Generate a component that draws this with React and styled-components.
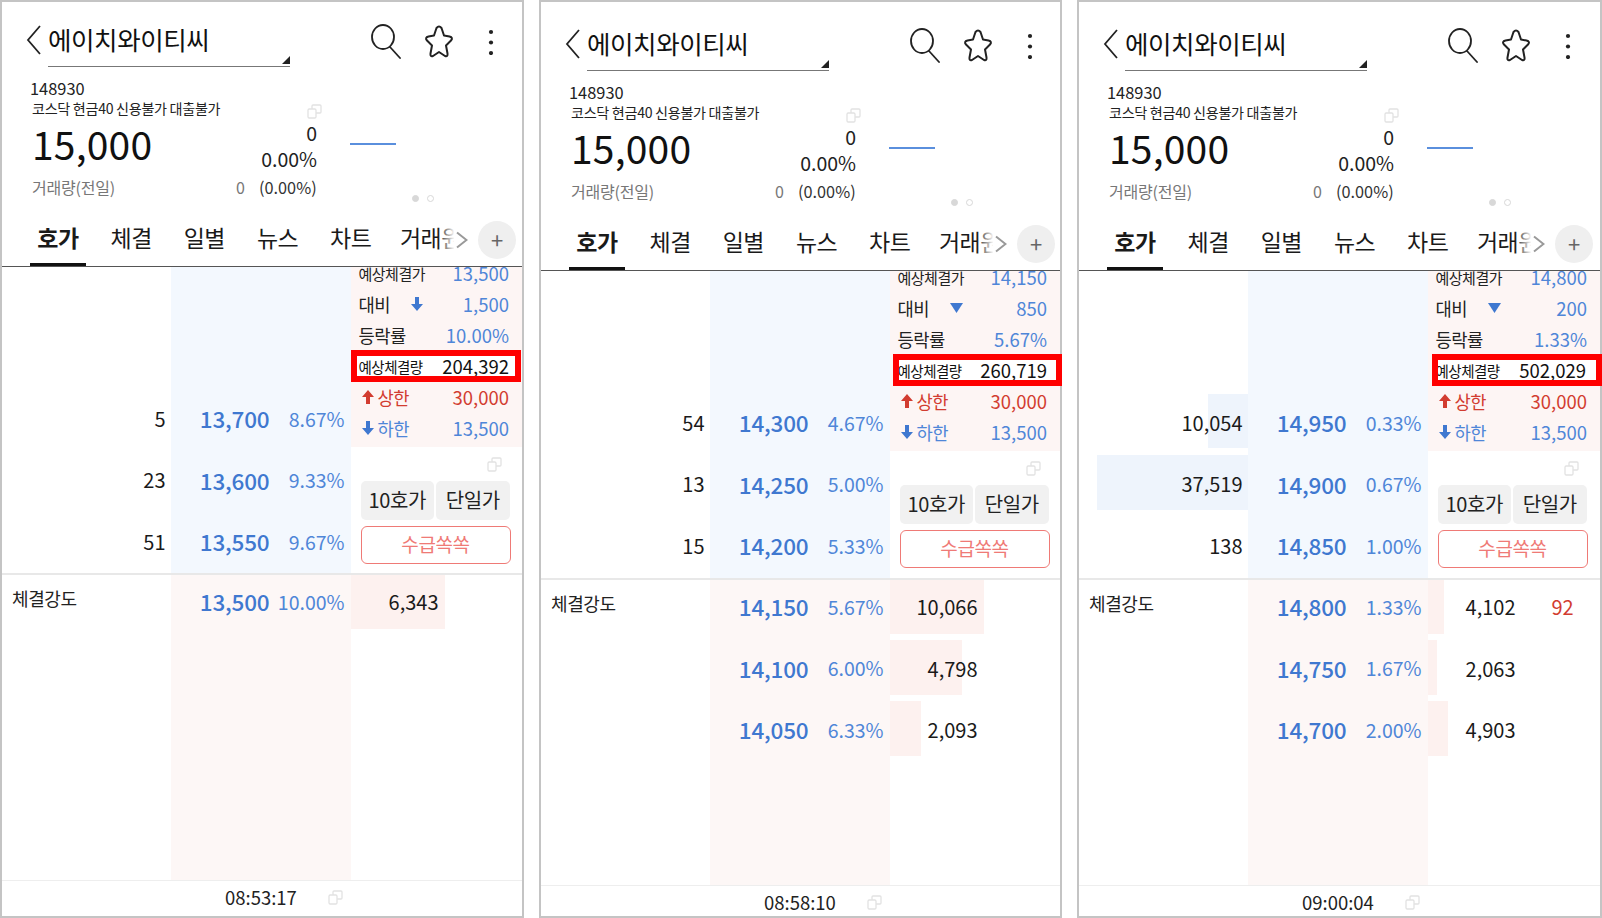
import React from "react";
import styled, { createGlobalStyle } from "styled-components";

const FONT = `"Noto Sans CJK KR", "Noto Sans", sans-serif`;
const BLUE = "#3f78d0";
const LIGHT_BLUE = "#4f86d8";
const RED = "#d23c30";

const GlobalStyle = createGlobalStyle`
  html, body { margin: 0; padding: 0; background: #fff; }
  body { width: 1602px; height: 918px; overflow: hidden; font-family: ${FONT}; }
`;

const Page = styled.div`
  display: flex;
  gap: 15px;
  width: 1602px;
  height: 918px;
`;

const Panel = styled.div`
  width: ${(p) => p.$width}px;
  height: 918px;
  flex: none;
  box-sizing: border-box;
  border: 2px solid #c4c4c4;
  display: flex;
  flex-direction: column;
  padding-top: ${(p) => p.$top}px;
  background: #fff;
  position: relative;
`;

const Head = styled.div`
  height: 65px;
  flex: none;
  display: flex;
  align-items: flex-start;
  padding: 22px 0 0 24px;
  box-sizing: border-box;
`;

const NameBox = styled.div`
  width: 242px;
  height: 42px;
  margin-left: 6px;
  border-bottom: 1px solid #777;
  font-size: 25.500px;
  line-height: 30px;
  letter-spacing: -0.4px;
  color: #111;
  position: relative;
  &::after {
    content: "";
    position: absolute;
    right: 0;
    bottom: 2px;
    border-style: solid;
    border-width: 0 0 8px 8px;
    border-color: transparent transparent #222 transparent;
  }
`;

const HeadIcons = styled.div`
  display: flex;
  align-items: center;
  margin-left: 81px;
`;

const StarSlot = styled.div`
  margin: 0 34px 0 23px;
  line-height: 0;
`;

const Info = styled.div`
  height: 144px;
  flex: none;
  position: relative;
`;

const Code = styled.div`
  padding: 12px 0 0 28px;
  font-size: 16.400px;
  line-height: 19px;
  color: #222;
`;

const Tags = styled.div`
  padding-left: 30px;
  font-size: 14.100px;
  line-height: 20px;
  letter-spacing: -0.3px;
  color: #222;
`;

const PriceRow = styled.div`
  display: flex;
  align-items: flex-start;
  height: 50px;
`;

const Price = styled.div`
  width: 285px;
  padding-left: 30px;
  box-sizing: border-box;
  font-size: 39px;
  line-height: 50px;
  letter-spacing: 0.2px;
  color: #111;
`;

const Change = styled.div`
  flex: none;
  width: 30px;
  margin-top: 2px;
  font-size: 19.500px;
  line-height: 25.500px;
  color: #222;
  display: flex;
  flex-direction: column;
  align-items: flex-end;
  white-space: nowrap;
`;

const FlatLine = styled.div`
  width: 46px;
  height: 1.500px;
  background: #5a8fdd;
  margin: 25px 0 0 33px;
`;

const VolRow = styled.div`
  display: flex;
  align-items: center;
  padding-left: 30px;
  margin-top: 7px;
  height: 24px;
  color: #777;
  font-size: 16px;
`;

const VolLabel = styled.span`
  width: 202px;
  letter-spacing: -0.2px;
`;

const VolValue = styled.span`
  width: 11px;
  text-align: right;
  color: #777;
`;

const VolPct = styled.span`
  margin-left: 14px;
  color: #333;
  font-size: 16.300px;
`;

const Dots = styled.div`
  position: absolute;
  left: 410px;
  bottom: 9px;
  display: flex;
  gap: 8px;
`;

const Dot = styled.span`
  width: 7px;
  height: 7px;
  box-sizing: border-box;
  border-radius: 50%;
  background: ${(p) => (p.$on ? "#d8d8d8" : "#fff")};
  border: 1px solid #d8d8d8;
`;

const FloatCopy = styled.div`
  position: absolute;
  left: ${(p) => p.$left}px;
  top: ${(p) => p.$top}px;
  line-height: 0;
`;

const Tabs = styled.div`
  height: 56px;
  flex: none;
  box-sizing: border-box;
  border-bottom: 1px solid #555;
  display: flex;
  position: relative;
  padding-left: 28px;
`;

const Tab = styled.div`
  width: 56px;
  margin-right: 17.200px;
  margin-left: ${(p) => (p.$last ? 4 : 0)}px;
  height: 55px;
  flex: none;
  box-sizing: border-box;
  text-align: center;
  font-size: 23px;
  line-height: 52px;
  letter-spacing: -0.5px;
  font-weight: ${(p) => (p.$active ? 700 : 400)};
  color: #1a1a1a;
  white-space: nowrap;
  border-bottom: ${(p) => (p.$active ? "3px solid #111" : "0")};
`;

const TabFade = styled.div`
  position: absolute;
  left: 436px;
  top: 10px;
  width: 30px;
  height: 36px;
  background: linear-gradient(to right, rgba(255, 255, 255, 0), #fff 55%);
  line-height: 0;
  padding: 10px 0 0 0;
  box-sizing: border-box;
  display: flex;
  justify-content: flex-end;
`;

const PlusButton = styled.div`
  position: absolute;
  left: 476px;
  top: 10px;
  width: 38px;
  height: 38px;
  border-radius: 50%;
  background: #efefef;
  color: #666;
  font-size: 22px;
  line-height: 36px;
  text-align: center;
`;

const Body = styled.div`
  flex: 1;
  display: flex;
  flex-direction: column;
  min-height: 0;
`;

const Upper = styled.div`
  display: grid;
  grid-template-columns: 168.500px 180px 1fr;
  height: ${(p) => (p.$late ? 309 : 308)}px;
  flex: none;
  box-sizing: border-box;
  border-bottom: 2px solid #e8e8e8;
`;

const AskCol = styled.div`
  display: flex;
  flex-direction: column;
  justify-content: flex-end;
  padding-bottom: ${(p) => (p.$late ? 1 : 0)}px;
`;

const MidCol = styled.div`
  display: flex;
  flex-direction: column;
  justify-content: ${(p) => (p.$lower ? "flex-start" : "flex-end")};
  padding-bottom: ${(p) => (p.$late ? 1 : 0)}px;
  background: ${(p) => (p.$lower ? "#fdf7f6" : "#f3f8fe")};
`;

const VolCell = styled.div`
  height: 61.500px;
  display: flex;
  align-items: center;
  justify-content: flex-end;
  position: relative;
  padding: 0 5px 2px 0;
  font-size: 20px;
  color: #1a1a1a;
  box-sizing: border-box;
  span { position: relative; }
`;

const VolBar = styled.div`
  position: absolute;
  top: 1px;
  bottom: 6px;
  right: 0;
  background: #eef4fc;
`;

const PriceCell = styled.div`
  height: 61.500px;
  box-sizing: border-box;
  padding-bottom: ${(p) => (p.$lower ? 9 : 2)}px;
  display: flex;
  align-items: center;
  font-weight: 500;
  color: ${BLUE};
`;

const CellPrice = styled.span`
  width: 99px;
  text-align: right;
  font-size: 22.500px;
  letter-spacing: -0.2px;
`;

const CellPct = styled.span`
  width: 75px;
  text-align: right;
  font-size: 19.500px;
  font-weight: 400;
  color: ${LIGHT_BLUE};
  white-space: nowrap;
`;

const SideCol = styled.div`
  display: flex;
  flex-direction: column;
`;

const Summary = styled.div`
  background: #fdf5f4;
  height: 180px;
  flex: none;
  box-sizing: border-box;
`;

const SumRow = styled.div`
  height: ${(p) => p.$height || 31}px;
  display: flex;
  align-items: center;
  justify-content: space-between;
  padding: 0 13px 0 8px;
  font-size: 17px;
  letter-spacing: -0.4px;
  color: #222;
`;

const ClippedRow = styled(SumRow)`
  height: 21px;
  box-sizing: border-box;
  padding-bottom: 9px;
  overflow: hidden;
`;

const SumHighlight = styled.div`
  height: 32px;
  margin-left: ${(p) => p.$shift}px;
  margin-right: ${(p) => (p.$shift ? -2 : 1)}px;
  box-sizing: border-box;
  border: 6px solid #ff0000;
  background: #fff;
  display: flex;
  align-items: center;
  justify-content: space-between;
  padding-right: ${(p) => 6 + p.$shift}px;
  font-size: 17.500px;
  color: #111;
  overflow: hidden;
`;

const TightLabel = styled.span`
  font-size: ${(p) => p.$size || 17.700}px;
  letter-spacing: -0.5px;
  white-space: nowrap;
  display: flex;
  align-items: center;
  gap: ${(p) => p.$gap || 0}px;
  margin-left: ${(p) => p.$pull || 0}px;
  color: ${(p) => p.$color || "#222"};
`;

const Value = styled.span`
  font-size: 18.500px;
  letter-spacing: 0;
  color: ${(p) => p.$color};
`;

const ButtonArea = styled.div`
  flex: 1;
  padding: 34px 0 0 10px;
  position: relative;
`;

const ToggleRow = styled.div`
  display: flex;
  gap: 2px;
`;

const Toggle = styled.div`
  width: 73.500px;
  height: 39px;
  border-radius: 5px;
  background: #f1f1f1;
  font-size: 20px;
  line-height: 37px;
  letter-spacing: -0.4px;
  text-align: center;
  color: #222;
`;

const SupplyButton = styled.div`
  width: 150px;
  height: 38px;
  margin-top: 6px;
  box-sizing: border-box;
  border: 1.500px solid #ef7a76;
  border-radius: 6px;
  font-size: 19px;
  line-height: 33px;
  text-align: center;
  letter-spacing: -0.4px;
  color: #ef7a76;
`;

const Lower = styled.div`
  flex: 1;
  display: grid;
  grid-template-columns: 168.500px 180px 1fr;
  min-height: 0;
`;

const StrengthLabel = styled.div`
  padding: 10px 0 0 10px;
  font-size: 18px;
  letter-spacing: -0.4px;
  color: #222;
`;

const BidCell = styled.div`
  height: 61.500px;
  box-sizing: border-box;
  padding-bottom: 8px;
  display: flex;
  align-items: center;
  position: relative;
  font-size: 20px;
  color: #1a1a1a;
`;

const BidBar = styled.div`
  position: absolute;
  left: 0;
  top: ${(p) => (p.$first ? 0 : -2)}px;
  height: ${(p) => (p.$first ? 54 : 55)}px;
  background: #fdf1ef;
`;

const BidVol = styled.span`
  position: relative;
  width: 88px;
  text-align: right;
`;

const BidExtra = styled.span`
  position: relative;
  margin-left: 36px;
  color: ${RED};
`;

const Footer = styled.div`
  height: ${(p) => p.$height}px;
  flex: none;
  box-sizing: border-box;
  border-top: 1px solid #eee;
  display: flex;
  align-items: flex-start;
  padding: 1px 0 0 223px;
  font-size: 18.500px;
  color: #222;
  gap: 31px;
`;

const FooterTime = styled.span`
  line-height: 30px;
`;

const FooterCopy = styled.span`
  line-height: 0;
  margin-top: 8px;
`;

const Copy = () => (
  <svg width="15" height="15" viewBox="0 0 15 15" fill="none" stroke="#e2e2e2" strokeWidth="1.3">
    <rect x="1" y="5" width="8" height="9" rx="1.2" />
    <path d="M5 5V2a1 1 0 0 1 1-1h7a1 1 0 0 1 1 1v6a1 1 0 0 1-1 1H9" />
  </svg>
);

const Back = () => (
  <svg width="16" height="32" viewBox="0 0 16 32" fill="none" stroke="#222" strokeWidth="1.8">
    <path d="M14 2 2 16l12 14" />
  </svg>
);

const Search = () => (
  <svg width="30" height="35" viewBox="0 0 30 35" fill="none" stroke="#222" strokeWidth="1.8" strokeLinecap="round">
    <ellipse cx="12" cy="13" rx="11" ry="12" />
    <path d="m19 23 10 11" />
  </svg>
);

const Star = () => (
  <svg width="30" height="35" viewBox="0 0 30 33" fill="none" stroke="#222" strokeWidth="2" strokeLinejoin="round">
    <path d="M10 10.500 12.500 3Q15 0 17.500 3L20 10.500 25.500 11.500Q29.500 12.500 27 15.500L22 20.500 23.500 28.500Q24 32 21 31L15 27 9 31Q6 32 6.500 28.500L8 20.500 3 15.500Q0.500 12.500 4.500 11.500Z" />
  </svg>
);

const More = () => (
  <svg width="6" height="26" viewBox="0 0 6 26" fill="#222">
    <circle cx="3" cy="3" r="2.100" />
    <circle cx="3" cy="13.500" r="2.100" />
    <circle cx="3" cy="24" r="2.100" />
  </svg>
);

const Chevron = () => (
  <svg width="14" height="18" viewBox="0 0 14 18" fill="#fff" stroke="#999" strokeWidth="2">
    <path d="M0 4h6L2 1l10.500 8L2 17l4-3H0z" stroke="none" />
    <path d="M3 1.500 12.500 9 3 16.500" fill="none" />
  </svg>
);

const Arrow = ({ up, color }) => (
  <svg width="12" height="14" viewBox="0 0 12 14" fill={color}>
    {up ? <path d="M6 0 12 7H8v7H4V7H0z" /> : <path d="M6 14 0 7h4V0h4v7h4z" />}
  </svg>
);

const Triangle = () => (
  <svg width="13" height="10" viewBox="0 0 13 10" fill={BLUE}>
    <path d="M0 0h13L6.500 10z" />
  </svg>
);

const screens = [
  {
    width: 524,
    top: 0,
    shift: 0,
    time: "08:53:17",
    expected: "13,500",
    diff: "1,500",
    arrow: "bold",
    rate: "10.00%",
    amount: "204,392",
    asks: [
      { vol: "5", price: "13,700", pct: "8.67%" },
      { vol: "23", price: "13,600", pct: "9.33%" },
      { vol: "51", price: "13,550", pct: "9.67%" },
    ],
    bids: [{ vol: "6,343", price: "13,500", pct: "10.00%", bar: 94 }],
  },
  {
    width: 523,
    top: 4,
    shift: 3,
    time: "08:58:10",
    expected: "14,150",
    diff: "850",
    arrow: "tri",
    rate: "5.67%",
    amount: "260,719",
    asks: [
      { vol: "54", price: "14,300", pct: "4.67%" },
      { vol: "13", price: "14,250", pct: "5.00%" },
      { vol: "15", price: "14,200", pct: "5.33%" },
    ],
    bids: [
      { vol: "10,066", price: "14,150", pct: "5.67%", bar: 94 },
      { vol: "4,798", price: "14,100", pct: "6.00%", bar: 72 },
      { vol: "2,093", price: "14,050", pct: "6.33%", bar: 31 },
    ],
  },
  {
    width: 525,
    top: 4,
    shift: 4,
    time: "09:00:04",
    expected: "14,800",
    diff: "200",
    arrow: "tri",
    rate: "1.33%",
    amount: "502,029",
    asks: [
      { vol: "10,054", price: "14,950", pct: "0.33%", bar: 40 },
      { vol: "37,519", price: "14,900", pct: "0.67%", bar: 151 },
      { vol: "138", price: "14,850", pct: "1.00%" },
    ],
    bids: [
      { vol: "4,102", price: "14,800", pct: "1.33%", bar: 16, extra: "92" },
      { vol: "2,063", price: "14,750", pct: "1.67%", bar: 9 },
      { vol: "4,903", price: "14,700", pct: "2.00%", bar: 20 },
    ],
  },
];

const Screen = ({ data }) => {
  const late = data.top > 0;
  return (
    <Panel $top={data.top} $width={data.width}>
      <Head>
        <Back />
        <NameBox>에이치와이티씨</NameBox>
        <HeadIcons>
          <Search />
          <StarSlot>
            <Star />
          </StarSlot>
          <More />
        </HeadIcons>
      </Head>
      <Info>
        <Code>148930</Code>
        <Tags>코스닥 현금40 신용불가 대출불가</Tags>
        <FloatCopy $left={305} $top={37}>
          <Copy />
        </FloatCopy>
        <PriceRow>
          <Price>15,000</Price>
          <Change>
            <span>0</span>
            <span>0.00%</span>
          </Change>
          <FlatLine />
        </PriceRow>
        <VolRow>
          <VolLabel>거래량(전일)</VolLabel>
          <VolValue>0</VolValue>
          <VolPct>(0.00%)</VolPct>
        </VolRow>
        <Dots>
          <Dot $on />
          <Dot />
        </Dots>
      </Info>
      <Tabs>
        <Tab $active>호가</Tab>
        <Tab>체결</Tab>
        <Tab>일별</Tab>
        <Tab>뉴스</Tab>
        <Tab>차트</Tab>
        <Tab $last>거래원</Tab>
        <TabFade>
          <Chevron />
        </TabFade>
        <PlusButton>+</PlusButton>
      </Tabs>
      <Body>
        <Upper $late={late}>
          <AskCol $late={late}>
            {data.asks.map((row) => (
              <VolCell key={row.price}>
                {row.bar && <VolBar style={{ width: row.bar }} />}
                <span>{row.vol}</span>
              </VolCell>
            ))}
          </AskCol>
          <MidCol $late={late}>
            {data.asks.map((row) => (
              <PriceCell key={row.price}>
                <CellPrice>{row.price}</CellPrice>
                <CellPct>{row.pct}</CellPct>
              </PriceCell>
            ))}
          </MidCol>
          <SideCol>
            <Summary>
              <ClippedRow>
                <TightLabel $size={15}>예상체결가</TightLabel>
                <Value $color={LIGHT_BLUE}>{data.expected}</Value>
              </ClippedRow>
              <SumRow>
                <TightLabel $gap={21}>
                  대비
                  {data.arrow === "tri" ? <Triangle /> : <Arrow color={BLUE} />}
                </TightLabel>
                <Value $color={LIGHT_BLUE}>{data.diff}</Value>
              </SumRow>
              <SumRow>
                <TightLabel>등락률</TightLabel>
                <Value $color={LIGHT_BLUE}>{data.rate}</Value>
              </SumRow>
              <SumHighlight $shift={data.shift}>
                <TightLabel $size={14.5} $color="#111" $pull={2 - data.shift}>
                  예상체결량
                </TightLabel>
                <Value $color="#111">{data.amount}</Value>
              </SumHighlight>
              <SumRow $height={30}>
                <TightLabel $gap={4} $pull={3} $color={RED}>
                  <Arrow up color={RED} />
                  상한
                </TightLabel>
                <Value $color={RED}>30,000</Value>
              </SumRow>
              <SumRow>
                <TightLabel $gap={4} $pull={3} $color={LIGHT_BLUE}>
                  <Arrow color={BLUE} />
                  하한
                </TightLabel>
                <Value $color={LIGHT_BLUE}>13,500</Value>
              </SumRow>
            </Summary>
            <ButtonArea>
              <FloatCopy $left={136} $top={10}>
                <Copy />
              </FloatCopy>
              <ToggleRow>
                <Toggle>10호가</Toggle>
                <Toggle>단일가</Toggle>
              </ToggleRow>
              <SupplyButton>수급쏙쏙</SupplyButton>
            </ButtonArea>
          </SideCol>
        </Upper>
        <Lower>
          <StrengthLabel>체결강도</StrengthLabel>
          <MidCol $lower>
            {data.bids.map((row) => (
              <PriceCell key={row.price} $lower>
                <CellPrice>{row.price}</CellPrice>
                <CellPct>{row.pct}</CellPct>
              </PriceCell>
            ))}
          </MidCol>
          <div>
            {data.bids.map((row, i) => (
              <BidCell key={row.price}>
                <BidBar $first={i === 0} style={{ width: row.bar }} />
                <BidVol>{row.vol}</BidVol>
                {row.extra && <BidExtra>{row.extra}</BidExtra>}
              </BidCell>
            ))}
          </div>
        </Lower>
        <Footer $height={late ? 31 : 36}>
          <FooterTime>{data.time}</FooterTime>
          <FooterCopy>
            <Copy />
          </FooterCopy>
        </Footer>
      </Body>
    </Panel>
  );
};

export default function App() {
  return (
    <>
      <GlobalStyle />
      <Page>
        {screens.map((s) => (
          <Screen key={s.time} data={s} />
        ))}
      </Page>
    </>
  );
}
